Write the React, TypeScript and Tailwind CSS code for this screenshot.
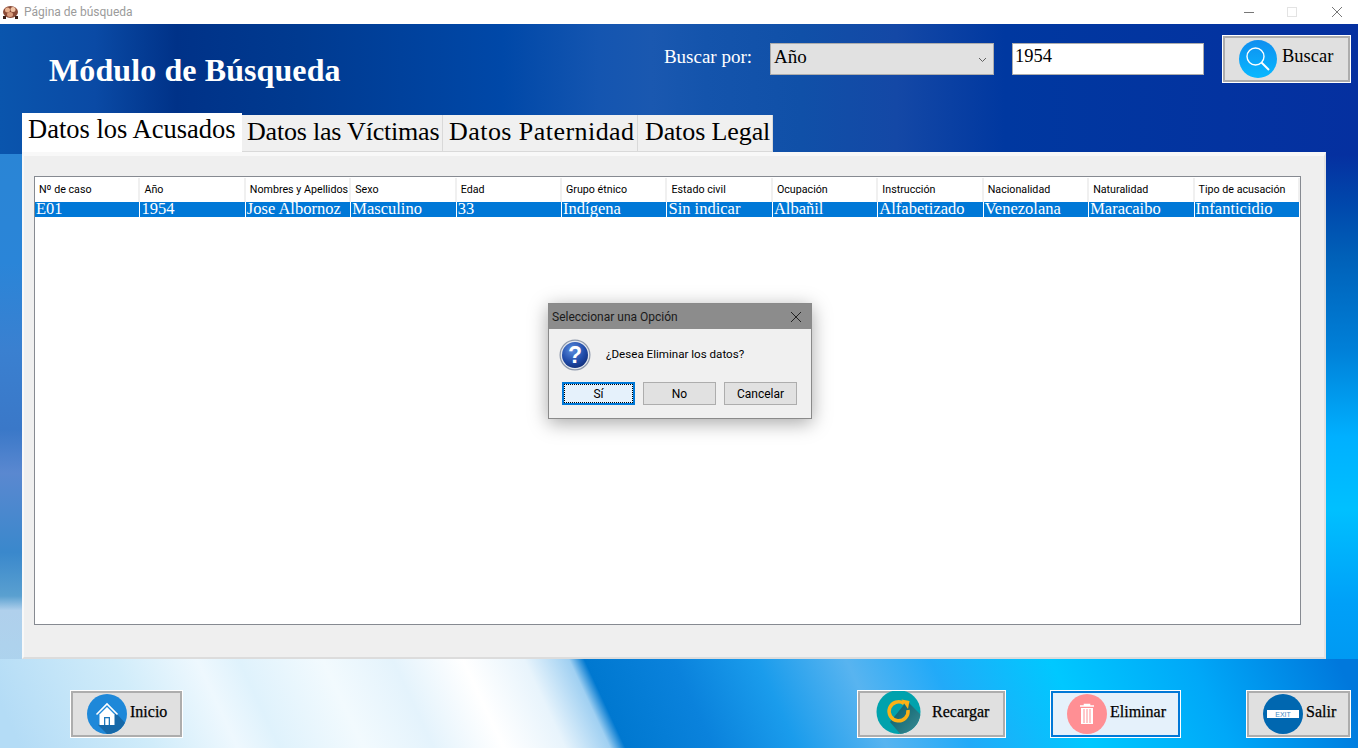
import React from "react";

const serif = "font-['Liberation_Serif','Times_New_Roman',serif]";
const sans = "font-['Roboto','Noto_Sans',sans-serif]";

const columns = [
  "Nº de caso",
  "Año",
  "Nombres y Apellidos",
  "Sexo",
  "Edad",
  "Grupo étnico",
  "Estado civil",
  "Ocupación",
  "Instrucción",
  "Nacionalidad",
  "Naturalidad",
  "Tipo de acusación",
];

const row = [
  "E01",
  "1954",
  "Jose Albornoz",
  "Masculino",
  "33",
  "Indígena",
  "Sin indicar",
  "Albañil",
  "Alfabetizado",
  "Venezolana",
  "Maracaibo",
  "Infanticidio",
];

function AppIcon() {
  return (
    <svg width="15" height="14" viewBox="0 0 15 14">
      <rect width="15" height="14" fill="#fff" />
      <ellipse cx="7.5" cy="7" rx="7.5" ry="6" fill="#8a4a36" />
      <ellipse cx="4.5" cy="5" rx="2.5" ry="2.5" fill="#e8b08e" />
      <ellipse cx="10" cy="4.5" rx="2.5" ry="2.5" fill="#f0c4a6" />
      <ellipse cx="7" cy="9.5" rx="3" ry="2.5" fill="#d99c7c" />
      <rect x="0" y="11" width="3" height="3" fill="#3a2018" />
      <rect x="12" y="11" width="3" height="3" fill="#3a2018" />
    </svg>
  );
}

function SearchIcon() {
  return (
    <svg width="38" height="38" viewBox="0 0 38 38">
      <defs>
        <linearGradient id="searchBg" x1="0" y1="0" x2="0" y2="1">
          <stop offset="0" stopColor="#0f8ff0" />
          <stop offset="1" stopColor="#08b8ff" />
        </linearGradient>
      </defs>
      <circle cx="19" cy="19" r="19" fill="url(#searchBg)" />
      <circle cx="16.5" cy="16.5" r="8.5" fill="none" stroke="#fff" strokeWidth="1.4" />
      <path d="M22.5 22.5 L30 30" stroke="#fff" strokeWidth="2" />
    </svg>
  );
}

function HomeIcon() {
  return (
    <svg width="40" height="40" viewBox="0 0 40 40">
      <defs>
        <clipPath id="homeClip">
          <circle cx="20" cy="20" r="20" />
        </clipPath>
      </defs>
      <circle cx="20" cy="20" r="20" fill="#1e88d9" />
      <path d="M11 31 L20 40 L40 40 L40 31 L29 19 Z" fill="#1668a8" clipPath="url(#homeClip)" />
      <path d="M9.5 20.5 L20 10 L30.5 20.5" fill="none" stroke="#fff" strokeWidth="1.6" />
      <path d="M12.5 20.5 L20 13 L27.5 20.5 V31 H12.5 Z" fill="#fff" />
      <rect x="17" y="23" width="6" height="8" fill="#1e78bd" />
      <rect x="18.3" y="24.3" width="3.4" height="6.7" fill="#fff" />
    </svg>
  );
}

function ReloadIcon() {
  return (
    <svg width="45" height="44" viewBox="0 0 45 44" className="-mt-1">
      <defs>
        <clipPath id="reloadClip">
          <circle cx="22.5" cy="22" r="22" />
        </clipPath>
        <linearGradient id="reloadShade" x1="0" y1="0" x2="1" y2="1">
          <stop offset="0" stopColor="#035a66" />
          <stop offset="1" stopColor="#3f8f98" />
        </linearGradient>
      </defs>
      <circle cx="22.5" cy="22" r="22" fill="#00a2ad" />
      <path d="M31 11 L46 26 L46 46 L26 46 L14 32 Z" fill="url(#reloadShade)" clipPath="url(#reloadClip)" />
      <path d="M28 13.5 A9.5 9.5 0 1 0 32 20" fill="none" stroke="#fbb116" strokeWidth="3.5" />
      <path d="M25.5 9.5 L33.5 11 L32 19 Z" fill="#fbb116" />
    </svg>
  );
}

function TrashIcon() {
  return (
    <svg width="40" height="40" viewBox="0 0 40 40">
      <circle cx="20" cy="20" r="20" fill="#ff8f94" />
      <path d="M13 12 H27 M17.5 12 V10.5 H22.5 V12" stroke="#fff" strokeWidth="1.6" fill="none" />
      <path d="M14 14 H26 V30 H14 Z" fill="#fff" />
      <path d="M17 15 V29 M20 15 V29 M23 15 V29" stroke="#ff8f94" strokeWidth="1" />
    </svg>
  );
}

function ExitIcon() {
  return (
    <svg width="40" height="40" viewBox="0 0 40 40">
      <circle cx="20" cy="20" r="20" fill="#0067b0" />
      <rect x="4" y="16" width="32" height="8" fill="#fff" />
      <text x="20" y="22.6" textAnchor="middle" fontSize="7" fontFamily="Liberation Sans, sans-serif" fill="#3f8ac4">
        EXIT
      </text>
    </svg>
  );
}

function QuestionIcon() {
  return (
    <svg width="32" height="32" viewBox="0 0 32 32">
      <defs>
        <radialGradient id="qBg" cx="0.4" cy="0.3" r="0.8">
          <stop offset="0" stopColor="#5c8fe0" />
          <stop offset="0.6" stopColor="#1f4aa8" />
          <stop offset="1" stopColor="#102a70" />
        </radialGradient>
      </defs>
      <circle cx="16" cy="16" r="15.5" fill="#8e99ac" />
      <circle cx="16" cy="16" r="14.3" fill="#e4e8ee" />
      <circle cx="16" cy="16" r="13" fill="url(#qBg)" />
      <text x="16" y="24" textAnchor="middle" fontSize="23" fontWeight="700" fontFamily="Liberation Sans, sans-serif" fill="#fff">
        ?
      </text>
    </svg>
  );
}

function ActionButton({
  icon,
  label,
  className,
}: {
  icon: React.ReactNode;
  label: string;
  className: string;
}) {
  return (
    <button className={`flex items-center h-[46px] bg-[#e0e0e0] border-2 border-[#adadad] outline outline-1 outline-white text-black ${serif} ${className}`}>
      {icon}
      <span className="text-[16px] pb-[4px] [-webkit-text-stroke:0.25px_black]">{label}</span>
    </button>
  );
}

export default function App() {
  return (
    <div className="relative w-[1358px] h-[748px] overflow-hidden flex flex-col">
      {/* Barra de título */}
      <div className={`h-6 bg-white flex items-center pl-[3px] text-[12px] text-[#9b9b9b] ${sans}`}>
        <AppIcon />
        <span className="ml-[6px]">Página de búsqueda</span>
        <div className="ml-auto flex items-center">
          <svg width="12" height="12" viewBox="0 0 12 12" className="mr-[32px]">
            <path d="M1 6.5 H11" stroke="#777" strokeWidth="1" />
          </svg>
          <svg width="10" height="10" viewBox="0 0 10 10" className="mr-[34px]">
            <rect x="0.5" y="0.5" width="9" height="9" fill="none" stroke="#e3e3e3" />
          </svg>
          <svg width="12" height="12" viewBox="0 0 12 12" className="mr-[15px]">
            <path d="M1 1 L11 11 M11 1 L1 11" stroke="#777" strokeWidth="1" />
          </svg>
        </div>
      </div>

      {/* Fondo: franja superior y laterales */}
      <div className="flex-1 flex flex-col [background:linear-gradient(90deg,#0a55ad_0%,#0a4aa5_7%,#003288_13%,#003a90_22%,#0048a8_37%,#1455b0_44%,#1a58b0_48%,#1454ac_52%,#1050a8_59%,#1448a6_66%,#0038a0_74%,#0530a0_100%)_top/100%_130px_no-repeat,linear-gradient(180deg,#0a55ad_0%,#0a5ab0_12%,#2a85d5_17%,#2a85d8_33%,#3a80d0_45%,#3a78c8_56%,#5a88d0_62%,#3a88cc_73%,#5aa0d0_79%,#b0d0ec_81%,#a8d8f0_100%)_left/22px_100%_no-repeat,linear-gradient(180deg,#0530a0_0%,#0530a0_18%,#0048ac_25%,#0060b8_32%,#0080d8_45%,#00b0ff_57%,#00c0ff_67%,#00a0f8_80%,#0090ea_100%)_right/32px_100%_no-repeat,#0038a0]">
        {/* Encabezado */}
        <div className="h-[89px] flex items-start pl-[49px] pr-[8px]">
          <h1 className={`mt-[27px] text-[32px] leading-[38px] font-bold tracking-[0.1px] text-white ${serif}`}>
            Módulo de Búsqueda
          </h1>
          <div className={`ml-auto mt-[12px] flex items-center ${serif}`}>
            <span className="text-[19px] text-white mr-[18px] pb-[4px]">Buscar por:</span>
            <div className="w-[224px] h-[32px] mr-[18px] bg-[#e1e1e1] border border-[#adadad] flex items-center pl-[3px] pr-[6px] text-[19px] text-black">
              <span className="pb-[4px]">Año</span>
              <svg width="9" height="6" viewBox="0 0 9 6" className="ml-auto mt-[2px]">
                <path d="M1 1 L4.5 4.5 L8 1" fill="none" stroke="#606060" />
              </svg>
            </div>
            <div className="w-[192px] h-[32px] mr-[19px] bg-white border border-[#adadad] flex items-center pl-[2px] text-[18.5px] text-black">
              <span className="pb-[4px]">1954</span>
            </div>
            <button className="w-[127px] h-[46px] bg-[#e0e0e0] border-2 border-[#adadad] outline outline-1 outline-white flex items-center pl-[14px] text-[18.5px] text-black">
              <SearchIcon />
              <span className="ml-[5px] pb-[4px]">Buscar</span>
            </button>
          </div>
        </div>

        {/* Pestañas */}
        <div className={`ml-[22px] h-[39px] flex items-end text-[26px] text-black ${serif}`}>
          <div className="w-[220px] h-[39px] bg-white pl-[6px] pb-[6px] flex items-center whitespace-nowrap text-[26.5px]">
            Datos los Acusados
          </div>
          <div className="w-[201px] h-[37px] bg-[#f0f0f0] border-r border-b border-[#d9d9d9] pl-[5px] pb-[4px] flex items-center whitespace-nowrap tracking-[-0.2px]">
            Datos las Víctimas
          </div>
          <div className="w-[195px] h-[37px] bg-[#f0f0f0] border-r border-b border-[#d9d9d9] pl-[6px] pb-[4px] flex items-center whitespace-nowrap tracking-[0.45px]">
            Datos Paternidad
          </div>
          <div className="w-[135px] h-[37px] bg-[#f0f0f0] border-r border-b border-[#d9d9d9] pl-[7px] pb-[4px] flex items-center whitespace-nowrap tracking-[-0.1px]">
            Datos Legal
          </div>
        </div>

        {/* Panel con la tabla */}
        <div className="ml-[22px] w-[1304px] h-[507px] bg-[#efefef] border-2 border-[#f8f8f8] border-t-[4px] border-r-[#e2e2e2] border-b-[#dcdcdc] pt-[20px] pl-[10px] pr-[23px] pb-[32px] flex flex-col">
          <div className="flex-1 bg-white border border-[#868a91]">
            <div className={`grid grid-cols-12 h-[25px] pt-[1px] text-[10.7px] text-black ${sans}`}>
              {columns.map((c) => (
                <div key={c} className="flex items-center pl-[4px] border-r-2 border-[#f0f0f0] whitespace-nowrap">
                  {c}
                </div>
              ))}
            </div>
            <div className={`grid grid-cols-12 h-[15px] bg-[#0078d7] text-[16.5px] leading-[14px] text-white ${serif}`}>
              {row.map((c) => (
                <div key={c} className="pl-[1px] border-r border-white whitespace-nowrap">
                  {c}
                </div>
              ))}
            </div>
          </div>
        </div>

        {/* Botones inferiores */}
        <div className="flex-1 flex items-start pt-[32px] pl-[71px] pr-[8px] bg-[linear-gradient(65deg,#b4dcf6_1.5%,#d0ecfa_11%,#eef8fe_17%,#dff2fc_20%,#f2fafe_26%,#e4f3fc_31%,#ffffff_36%,#e8f4fc_40.4%,#a0d0f2_43.6%,#0078d0_44.7%,#0a82dc_51%,#1a9cec_57%,#58b4f0_63.4%,#22aaf8_69.4%,#00c8ff_78%,#00a8f8_88%,#0078dc_98.5%)]">
          <ActionButton icon={<HomeIcon />} label="Inicio" className="w-[111px] pl-[14px] gap-[3px]" />
          <ActionButton icon={<ReloadIcon />} label="Recargar" className="ml-auto w-[147px] pl-[16px] gap-[11px]" />
          <button className={`ml-[46px] w-[129px] h-[46px] flex items-center pl-[14px] gap-[3px] bg-[#e5f1fb] border-2 border-[#0078d7] outline outline-1 outline-white text-black ${serif}`}>
            <TrashIcon />
            <span className="text-[16px] pb-[4px] [-webkit-text-stroke:0.25px_black]">Eliminar</span>
          </button>
          <ActionButton icon={<ExitIcon />} label="Salir" className="ml-[67px] w-[103px] pl-[14px] gap-[3px]" />
        </div>
      </div>

      {/* Diálogo de confirmación */}
      <div className={`absolute left-[548px] top-[303px] w-[264px] h-[116px] bg-[#f0f0f0] border border-[#8a8a8a] shadow-[0_4px_18px_rgba(0,0,0,0.35)] flex flex-col text-[12px] text-black ${sans}`}>
        <div className="h-[25px] bg-[#8c8c8c] flex items-center pl-[3px] pr-[9px] text-[#1a1a1a]">
          Seleccionar una Opción
          <svg width="12" height="12" viewBox="0 0 12 12" className="ml-auto">
            <path d="M1 1 L11 11 M11 1 L1 11" stroke="#222" strokeWidth="1" />
          </svg>
        </div>
        <div className="flex items-center pl-[10px] h-[52px]">
          <QuestionIcon />
          <span className="ml-[15px] text-[11.6px]">¿Desea Eliminar los datos?</span>
        </div>
        <div className="flex pl-[13px] gap-[8px] pt-[1px]">
          <button className="w-[73px] h-[23px] bg-[#e5f1fb] border-2 border-[#0078d7] outline outline-1 outline-dotted -outline-offset-3 outline-black">Sí</button>
          <button className="w-[73px] h-[23px] bg-[#e1e1e1] border border-[#adadad]">No</button>
          <button className="w-[73px] h-[23px] bg-[#e1e1e1] border border-[#adadad]">Cancelar</button>
        </div>
      </div>
    </div>
  );
}
